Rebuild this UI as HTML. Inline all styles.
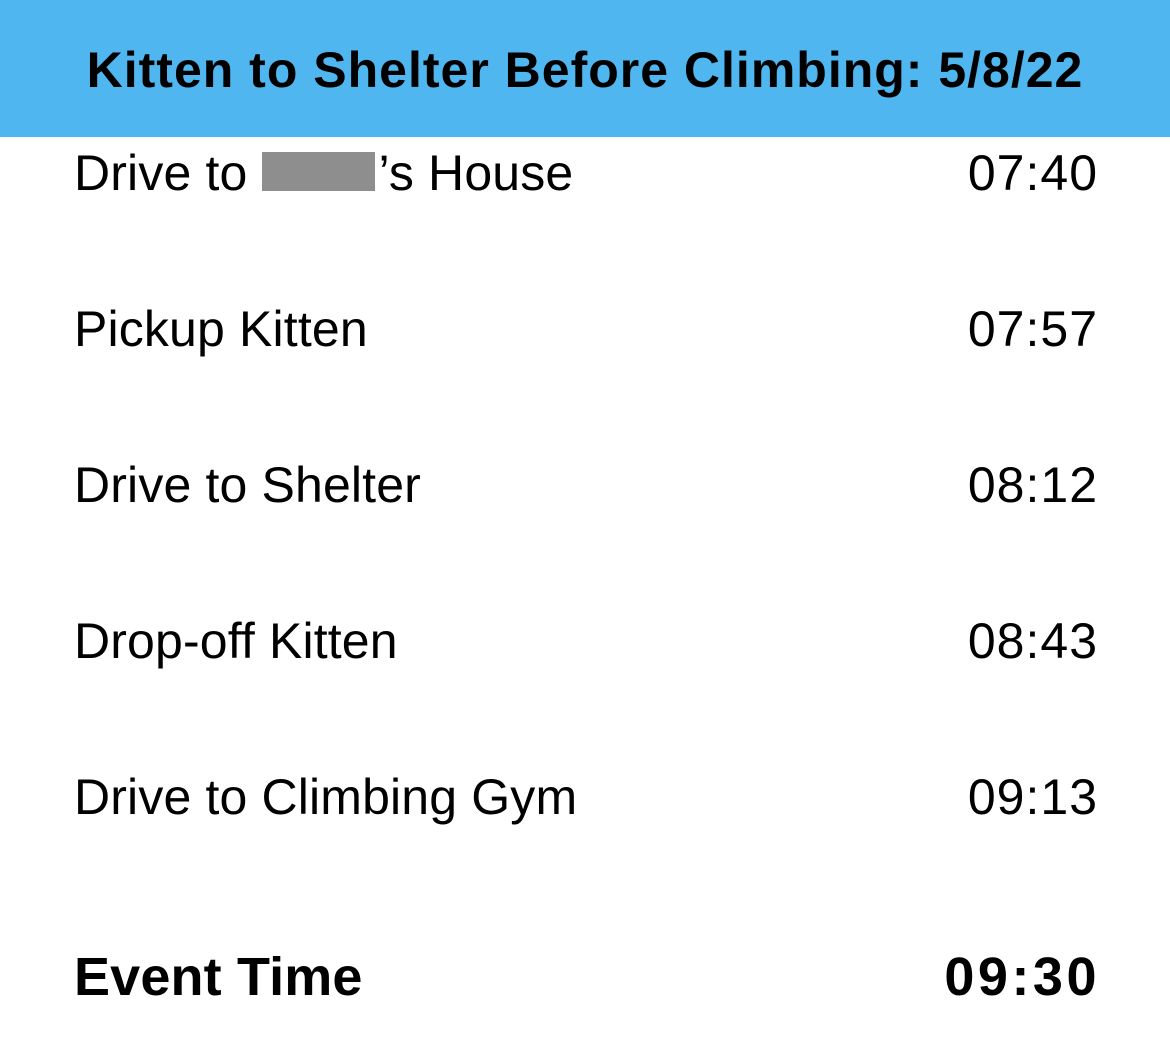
<!DOCTYPE html>
<html><head><meta charset="utf-8"><style>
html,body{margin:0;padding:0;width:1170px;height:1064px;background:#fff;overflow:hidden;font-family:"Liberation Sans",Arial,sans-serif;color:#000}
.hdr{position:absolute;left:0;top:0;width:1170px;height:137px;background:#4fb6ef}
.t{position:absolute;left:0;width:1170px;text-align:center;top:45px;font-size:50px;line-height:50px;font-weight:bold;letter-spacing:1px}
.r{position:absolute;font-size:50px;line-height:50px;white-space:nowrap;letter-spacing:0.15px}
.l{left:74px}
.rt{right:72px;text-align:right;letter-spacing:1px}
.b{font-weight:bold;font-size:54px;line-height:54px}
.rt.b{letter-spacing:3.5px;right:70px}
.box{display:inline-block;width:113px;height:39px;background:#8e8e8e;vertical-align:-1px;margin:0 4px 0 0}
</style></head><body>
<div class="hdr"><div class="t">Kitten to Shelter Before Climbing: 5/8/22</div></div>
<div class="r l" style="top:148px">Drive to <span class="box"></span>’s House</div>
<div class="r rt" style="top:148px">07:40</div>
<div class="r l" style="top:304px">Pickup Kitten</div>
<div class="r rt" style="top:304px">07:57</div>
<div class="r l" style="top:460px">Drive to Shelter</div>
<div class="r rt" style="top:460px">08:12</div>
<div class="r l" style="top:616px">Drop-off Kitten</div>
<div class="r rt" style="top:616px">08:43</div>
<div class="r l" style="top:772px">Drive to Climbing Gym</div>
<div class="r rt" style="top:772px">09:13</div>
<div class="r l b" style="top:950px">Event Time</div>
<div class="r rt b" style="top:950px">09:30</div>
</body></html>
